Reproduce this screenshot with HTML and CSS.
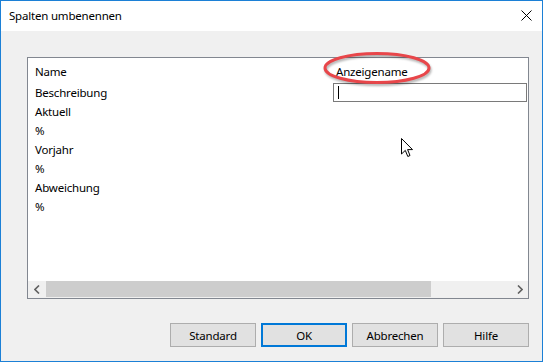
FILE: index.html
```html
<!DOCTYPE html>
<html lang="de">
  <head>
    <meta charset="UTF-8" />
    <meta name="viewport" content="width=device-width, initial-scale=1.0" />
    <title>Spalten umbenennen</title>
    <link rel="stylesheet" href="styles.css">
  </head>
  <body>
    <div class="window">
      <div class="titlebar">
        <span class="title">Spalten umbenennen</span>
        <svg class="close" width="11" height="11" viewBox="0 0 11 11">
          <path d="M0.5 0.5 L10.5 10.5 M10.5 0.5 L0.5 10.5" stroke="#000" stroke-width="1" fill="none" />
        </svg>
      </div>

      <div class="content">
        <div class="panel">
          <div class="grid">
            <div class="head">Name</div>
            <div class="head head-name">Anzeigename</div>

            <div class="cell">Beschreibung</div>
            <div class="cell"><div class="edit"><span class="caret"></span></div></div>
            <div class="cell">Aktuell</div>
            <div class="cell"></div>
            <div class="cell">%</div>
            <div class="cell"></div>
            <div class="cell">Vorjahr</div>
            <div class="cell"></div>
            <div class="cell">%</div>
            <div class="cell"></div>
            <div class="cell">Abweichung</div>
            <div class="cell"></div>
            <div class="cell">%</div>
            <div class="cell"></div>
          </div>

          <div class="hscroll">
            <div class="arrow">
              <svg width="6" height="9" viewBox="0 0 6 9"><path d="M5 0.5 L1 4.5 L5 8.5" stroke="#606060" stroke-width="1.6" fill="none" /></svg>
            </div>
            <div class="track"><div class="thumb"></div></div>
            <div class="arrow">
              <svg width="6" height="9" viewBox="0 0 6 9"><path d="M1 0.5 L5 4.5 L1 8.5" stroke="#606060" stroke-width="1.6" fill="none" /></svg>
            </div>
          </div>
        </div>

        <div class="buttons">
          <button class="btn">Standard</button>
          <button class="btn btn-default">OK</button>
          <button class="btn">Abbrechen</button>
          <button class="btn">Hilfe</button>
        </div>
      </div>

      <!-- red marker drawn over the column header -->
      <svg class="marker" width="114" height="36" viewBox="0 0 114 36">
        <ellipse cx="56" cy="17" rx="52" ry="14.5" stroke="#e8464a" stroke-width="3" fill="none" />
      </svg>

      <svg class="pointer" width="13" height="21" viewBox="0 0 13 21">
        <path d="M0.5 0.5 L0.5 16 L4.3 12.4 L6.8 18.5 L9 17.5 L6.6 11.6 L11.5 11.6 Z" fill="#fff" stroke="#000" stroke-width="1" stroke-linejoin="round" />
      </svg>
    </div>
  </body>
</html>
```

FILE: styles.css
```css
* {
  padding: 0;
  margin: 0;
  box-sizing: border-box;
}
body {
  width: 543px;
  height: 362px;
  overflow: hidden;
  font-family: "Noto Sans", "Open Sans", sans-serif;
  font-size: 11.5px;
  letter-spacing: -0.2px;
  color: #000;
}
.window {
  position: relative;
  width: 543px;
  height: 362px;
  border: 1px solid #1c80d6;
  background: #f0f0f0;
  display: flex;
  flex-direction: column;
}
.titlebar {
  height: 30px;
  background: #fff;
  display: flex;
  align-items: center;
  justify-content: space-between;
  padding: 0 10px 0 8px;
}
.title {
  line-height: 16px;
  margin-top: -1px;
}
.close {
  display: block;
  margin-top: -1px;
}
.content {
  flex: 1;
  padding: 26px 0 0 26px;
}
.panel {
  width: 502px;
  height: 242px;
  background: #fff;
  border: 1px solid #828790;
  display: flex;
  flex-direction: column;
}
.grid {
  flex: 1;
  display: grid;
  grid-template-columns: 305px 1fr;
  grid-template-rows: 25px;
  grid-auto-rows: 19px;
  align-content: start;
}
.head {
  padding: 4px 0 0 7px;
  line-height: 19px;
}
.head-name {
  padding-left: 3px;
}
.cell {
  padding-left: 7px;
  line-height: 19px;
}
.cell:nth-child(even) {
  padding-left: 0;
}
.edit {
  width: 194px;
  height: 19px;
  border: 1px solid #7a7a7a;
  background: #fff;
  padding: 2px 0 0 4px;
}
.caret {
  display: block;
  width: 1px;
  height: 13px;
  background: #000;
}
.hscroll {
  height: 17px;
  display: flex;
  background: #f0f0f0;
}
.arrow {
  width: 17px;
  display: flex;
  align-items: center;
  justify-content: center;
}
.arrow svg {
  display: block;
}
.track {
  flex: 1;
  padding: 0 0 0 1px;
}
.thumb {
  width: 385px;
  height: 16px;
  background: #cdcdcd;
}
.buttons {
  width: 502px;
  margin-top: 24px;
  display: flex;
  justify-content: flex-end;
  gap: 5px;
}
.btn {
  width: 86px;
  height: 24px;
  background: #e1e1e1;
  border: 1px solid #adadad;
  font-family: inherit;
  font-size: 11.5px;
  letter-spacing: -0.2px;
  color: #000;
}
.btn-default {
  border: 2px solid #0078d7;
}
.marker {
  position: absolute;
  left: 320px;
  top: 50px;
  filter: drop-shadow(1px 2px 1px rgba(0, 0, 0, 0.3));
}
.pointer {
  position: absolute;
  left: 400px;
  top: 137px;
}
```
